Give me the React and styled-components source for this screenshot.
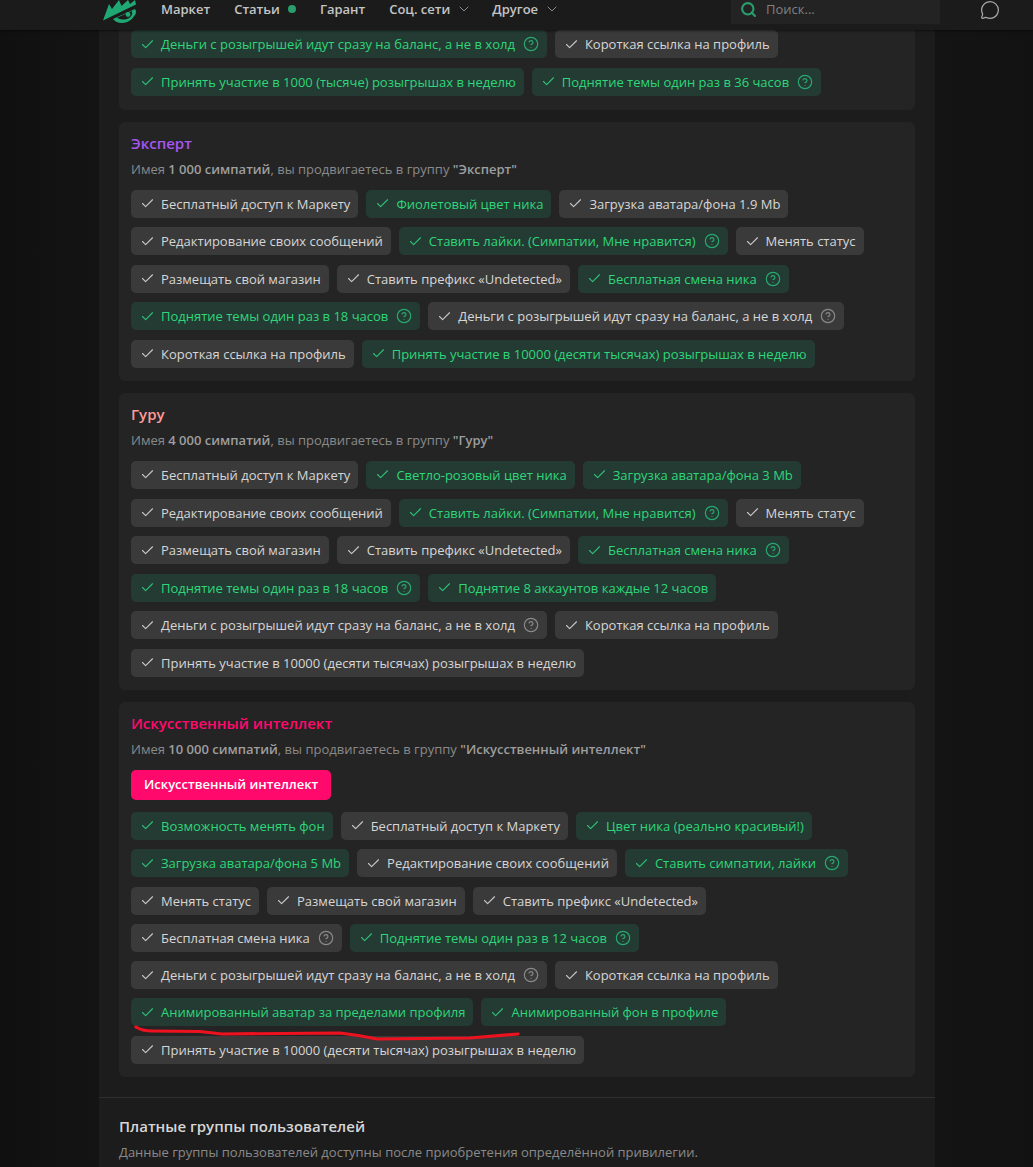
import React from 'react';
import styled, { createGlobalStyle } from 'styled-components';
import { Check, ChevronDown, CircleHelp, MessageCircle, Search } from 'lucide-react';

const GlobalStyle = createGlobalStyle`
  html, body {
    margin: 0;
    background: #121212;
  }
  body {
    font-family: 'Open Sans', 'Noto Sans', sans-serif;
    font-size: 13px;
    color: #d6d6d6;
  }
`;

const Page = styled.div`
  position: relative;
  height: 1167px;
  overflow: hidden;
  background: linear-gradient(90deg, #101010 0, #141414 99px, #141414 935px, #121212 100%);
`;

const Header = styled.header`
  display: flex;
  align-items: flex-start;
  height: 30px;
  padding-left: 103px;
  background: #1b1b1b;
  box-shadow: 0 1px 2px rgba(0, 0, 0, 0.5);
  position: relative;
`;

const LogoMark = styled.svg`
  width: 35px;
  height: 24px;
  margin-right: 23px;
  flex: none;
`;

const Nav = styled.nav`
  display: flex;
  align-items: center;
  gap: 24px;
`;

const NavItem = styled.a`
  display: flex;
  align-items: center;
  gap: ${(p) => (p.$dropdown ? '6px' : '8px')};
  line-height: 18px;
  color: #c4c4c4;
  font-weight: 600;
  font-size: 13px;
`;

const NavChevron = styled(ChevronDown)`
  margin-right: -4px;
  color: #8a8a8a;
`;

const GreenDot = styled.span`
  width: 8px;
  height: 8px;
  border-radius: 50%;
  background: #2a9d6c;
`;

const SearchBox = styled.div`
  position: absolute;
  left: 731px;
  top: 0;
  display: flex;
  align-items: center;
  gap: 9px;
  width: 209px;
  height: 24px;
  padding: 0 0 6px 9px;
  box-sizing: border-box;
  background: #232323;
  color: #808080;
  font-size: 13px;
`;

const ChatButton = styled.span`
  position: absolute;
  left: 980px;
  top: 0;
  display: flex;
  color: #a8a8a8;
`;

const Main = styled.main`
  width: 836px;
  height: 1137px;
  margin-left: 99px;
  background: #1c1c1c;
  overflow: hidden;
`;

const Groups = styled.div`
  display: flex;
  flex-direction: column;
  gap: 12px;
  padding: 0 20px;
`;

const Card = styled.section`
  padding: ${(p) => (p.$clipped ? '0 12px 14px' : '11px 12px 13px')};
  background: #242424;
  border-radius: ${(p) => (p.$clipped ? '0 0 6px 6px' : '6px')};
`;

const Title = styled.h3`
  margin: 0 0 6px;
  font-size: 15px;
  line-height: 20px;
  font-weight: 600;
  color: ${(p) => p.$color};
`;

const Explain = styled.p`
  margin: 0 0 11px;
  font-size: 13px;
  line-height: 20px;
  color: #8a8a8a;

  b {
    font-weight: 600;
    color: #9e9e9e;
  }
`;

const Banner = styled.div`
  display: inline-block;
  margin-bottom: 12px;
  padding: 0 13px 1px;
  line-height: 29px;
  border-radius: 5px;
  background: #ff0a6c;
  color: #fff;
  font-size: 13px;
  font-weight: 600;
`;

const Chips = styled.div`
  display: flex;
  flex-wrap: wrap;
  gap: ${(p) => (p.$tight ? '9.3px' : '9.6px')} 8px;
`;

const Chip = styled.div`
  display: flex;
  align-items: center;
  gap: 6px;
  height: 28px;
  padding: 0 8px 0 9px;
  border-radius: 5px;
  font-size: 13px;
  white-space: nowrap;
  background: ${(p) => (p.$on ? '#233b32' : '#3a3a3a')};
  color: ${(p) => (p.$on ? '#2fd67b' : '#d6d6d6')};

  svg {
    flex: none;
    color: ${(p) => (p.$on ? '#2fbf78' : '#c8c8c8')};
  }
`;

const HelpIcon = styled(CircleHelp)`
  margin-left: 2px;
  color: ${(p) => (p.$on ? '#2aa873' : '#8a8a8a')} !important;
`;

const PaidBlock = styled.div`
  margin-top: 20px;
  padding: 18px 20px 0;
  border-top: 1px solid #2f2f2f;
`;

const PaidTitle = styled.h2`
  margin: 0 0 6px;
  font-size: 15px;
  line-height: 20px;
  font-weight: 600;
  color: #d6d6d6;
`;

const PaidText = styled.p`
  margin: 0;
  font-size: 13px;
  line-height: 20px;
  color: #8a8a8a;
`;

const Underline = styled.svg`
  position: absolute;
  left: 130px;
  top: 1020px;
  width: 395px;
  height: 26px;
  pointer-events: none;
`;

// [text, green, has help icon]
const groups = [
  {
    id: 'top',
    clipped: true,
    chips: [
      ['Деньги с розыгрышей идут сразу на баланс, а не в холд', true, true],
      ['Короткая ссылка на профиль'],
      ['Принять участие в 1000 (тысяче) розыгрышах в неделю', true],
      ['Поднятие темы один раз в 36 часов', true, true],
    ],
  },
  {
    id: 'expert',
    title: 'Эксперт',
    color: '#a855f0',
    likes: '1 000',
    chips: [
      ['Бесплатный доступ к Маркету'],
      ['Фиолетовый цвет ника', true],
      ['Загрузка аватара/фона 1.9 Mb'],
      ['Редактирование своих сообщений'],
      ['Ставить лайки. (Симпатии, Мне нравится)', true, true],
      ['Менять статус'],
      ['Размещать свой магазин'],
      ['Ставить префикс «Undetected»'],
      ['Бесплатная смена ника', true, true],
      ['Поднятие темы один раз в 18 часов', true, true],
      ['Деньги с розыгрышей идут сразу на баланс, а не в холд', false, true],
      ['Короткая ссылка на профиль'],
      ['Принять участие в 10000 (десяти тысячах) розыгрышах в неделю', true],
    ],
  },
  {
    id: 'guru',
    title: 'Гуру',
    color: '#ff9a9a',
    likes: '4 000',
    chips: [
      ['Бесплатный доступ к Маркету'],
      ['Светло-розовый цвет ника', true],
      ['Загрузка аватара/фона 3 Mb', true],
      ['Редактирование своих сообщений'],
      ['Ставить лайки. (Симпатии, Мне нравится)', true, true],
      ['Менять статус'],
      ['Размещать свой магазин'],
      ['Ставить префикс «Undetected»'],
      ['Бесплатная смена ника', true, true],
      ['Поднятие темы один раз в 18 часов', true, true],
      ['Поднятие 8 аккаунтов каждые 12 часов', true],
      ['Деньги с розыгрышей идут сразу на баланс, а не в холд', false, true],
      ['Короткая ссылка на профиль'],
      ['Принять участие в 10000 (десяти тысячах) розыгрышах в неделю'],
    ],
  },
  {
    id: 'ai',
    title: 'Искусственный интеллект',
    color: '#ff0a6c',
    likes: '10 000',
    banner: true,
    chips: [
      ['Возможность менять фон', true],
      ['Бесплатный доступ к Маркету'],
      ['Цвет ника (реально красивый!)', true],
      ['Загрузка аватара/фона 5 Mb', true],
      ['Редактирование своих сообщений'],
      ['Ставить симпатии, лайки', true, true],
      ['Менять статус'],
      ['Размещать свой магазин'],
      ['Ставить префикс «Undetected»'],
      ['Бесплатная смена ника', false, true],
      ['Поднятие темы один раз в 12 часов', true, true],
      ['Деньги с розыгрышей идут сразу на баланс, а не в холд', false, true],
      ['Короткая ссылка на профиль'],
      ['Анимированный аватар за пределами профиля', true],
      ['Анимированный фон в профиле', true],
      ['Принять участие в 10000 (десяти тысячах) розыгрышах в неделю'],
    ],
  },
];

function Logo() {
  return (
    <LogoMark viewBox="0 0 35 24">
      <path
        fill="#1fa873"
        d="M0 20.5 L6 4 L9 9 L16 0 L18.5 6 L25 0 L27 4 L32 0 L33 4.5 Z"
      />
      <path
        fill="#1fa873"
        d="M10 19 L32 9 Q34 12 32 15 Q27 23 19 23 Q13 23 10 19 Z"
      />
      <path fill="#1b1b1b" d="M14 17.8 L29 11 Q30 17 24 19 Q18 20.5 14 17.8 Z" />
      <circle cx="25" cy="14.5" r="2.4" fill="#1fa873" />
    </LogoMark>
  );
}

function GroupChip({ text, on, help }) {
  return (
    <Chip $on={on}>
      <Check size={15} strokeWidth={1.75} />
      <span>{text}</span>
      {help && <HelpIcon size={16} strokeWidth={1.75} $on={on} />}
    </Chip>
  );
}

function App() {
  return (
    <Page>
      <GlobalStyle />
      <Header>
        <Logo />
        <Nav>
          <NavItem>Маркет</NavItem>
          <NavItem>
            Статьи <GreenDot />
          </NavItem>
          <NavItem>Гарант</NavItem>
          <NavItem $dropdown>
            Соц. сети <NavChevron size={16} strokeWidth={1.5} />
          </NavItem>
          <NavItem $dropdown>
            Другое <NavChevron size={16} strokeWidth={1.5} />
          </NavItem>
        </Nav>
        <SearchBox>
          <Search size={17} strokeWidth={3} color="#2a9d6c" />
          Поиск...
        </SearchBox>
        <ChatButton>
          <MessageCircle size={20} strokeWidth={1.5} />
        </ChatButton>
      </Header>
      <Main>
        <Groups>
          {groups.map((group) => (
            <Card key={group.id} $clipped={group.clipped}>
              {group.title && <Title $color={group.color}>{group.title}</Title>}
              {group.title && (
                <Explain>
                  Имея <b>{group.likes} симпатий</b>, вы продвигаетесь в группу{' '}
                  <b>"{group.title}"</b>
                </Explain>
              )}
              {group.banner && <Banner>{group.title}</Banner>}
              <Chips $tight={group.banner}>
                {group.chips.map(([text, on, help]) => (
                  <GroupChip key={text} text={text} on={on} help={help} />
                ))}
              </Chips>
            </Card>
          ))}
        </Groups>
        <PaidBlock>
          <PaidTitle>Платные группы пользователей</PaidTitle>
          <PaidText>
            Данные группы пользователей доступны после приобретения определённой привилегии.
          </PaidText>
        </PaidBlock>
      </Main>
      <Underline viewBox="130 1020 395 26">
        <path
          d="M136 1027 Q142 1031 152 1031 L200 1031.5 L222 1034 L340 1033 Q358 1035 377 1039 L470 1038 L518 1034"
          fill="none"
          stroke="#ee1220"
          strokeWidth="3.2"
          strokeLinecap="round"
        />
      </Underline>
    </Page>
  );
}

export default App;
